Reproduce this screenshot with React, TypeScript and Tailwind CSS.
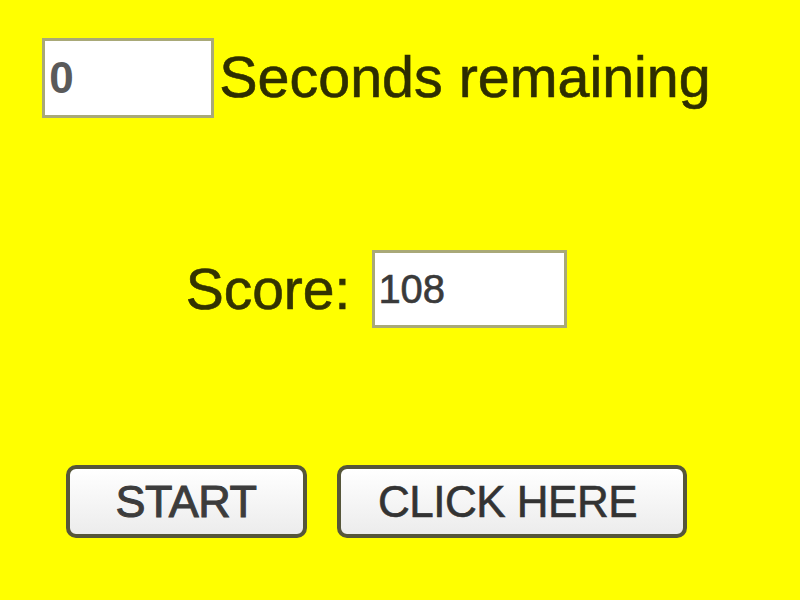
const App = () => {
  const secondsLeft = 0;
  const score = 108;

  return (
    <div className="min-h-screen w-[800px] h-[600px] bg-[#ffff00] overflow-hidden font-['Liberation_Sans',Arial,sans-serif]">
      <div className="w-[752px] flex flex-col items-center pt-[38px]">
        {/* timer */}
        <div className="flex items-center ml-[1px]">
          <div className="w-[172px] h-[80px] bg-white border-[3px] border-[#a9a978] flex items-center pl-[4px]">
            <span className="text-[44px] leading-none font-bold text-[#5a5a5a]">{secondsLeft}</span>
          </div>
          <span className="ml-[5px] text-[57.4px] leading-none text-[#2e2e00] [-webkit-text-stroke:0.6px_#2e2e00]">Seconds remaining</span>
        </div>

        {/* score */}
        <div className="flex items-center mt-[132px] ml-[1px]">
          <span className="text-[57px] leading-none text-[#333300] [-webkit-text-stroke:0.6px_#333300]">Score:</span>
          <div className="ml-[22px] w-[195px] h-[78px] bg-white border-[3px] border-[#a9a978] flex items-center pl-[3px]">
            <span className="text-[40px] leading-none text-[#3a3a3a] [-webkit-text-stroke:0.6px_#3a3a3a]">{score}</span>
          </div>
        </div>

        {/* controls */}
        <div className="flex items-center gap-[30px] mt-[137px]">
          <button className="w-[241px] h-[73px] rounded-[10px] border-[4px] border-[#56563a] bg-gradient-to-b from-[#ffffff] to-[#ececec] text-[45px] leading-none text-[#3c3c3c] tracking-[-0.5px] [-webkit-text-stroke:1px_#3c3c3c]">
            START
          </button>
          <button className="w-[350px] h-[73px] rounded-[10px] border-[4px] border-[#56563a] bg-gradient-to-b from-[#ffffff] to-[#ececec] text-[44px] leading-none text-[#333333] tracking-[-0.5px] pr-[8px] [-webkit-text-stroke:0.6px_#333333]">
            CLICK HERE
          </button>
        </div>
      </div>
    </div>
  );
};

export default App;
